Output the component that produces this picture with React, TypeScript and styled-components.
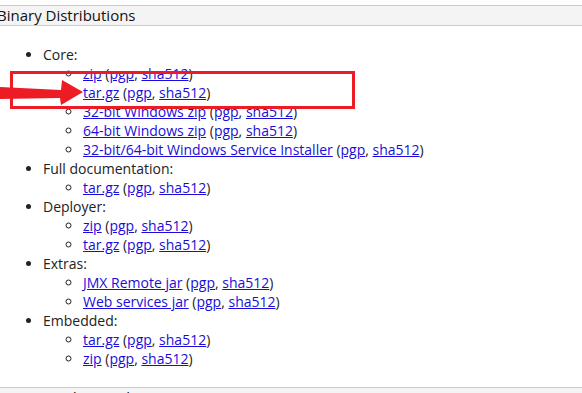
import React from 'react';
import styled, {createGlobalStyle} from 'styled-components';

const GlobalStyle = createGlobalStyle`
  html, body {
    margin: 0;
    padding: 0;
    background: #fff;
    overflow: hidden;
  }
  body {
    font-family: "Open Sans", "Liberation Sans", sans-serif;
    font-size: 14px;
    color: #222;
  }
`;

const Page = styled.div`
  position: relative;
  width: 582px;
  height: 393px;
  padding-top: 5px;
  box-sizing: border-box;
  overflow: hidden;
`;

const SectionHeader = styled.h3`
  margin: 0;
  height: 19px;
  line-height: 19px;
  background: #f4f4f4;
  border-top: 1px solid #ccc;
  border-bottom: 1px solid #ccc;
  font-size: 15px;
  font-weight: 400;
  color: #111;
  text-indent: -3px;
  white-space: nowrap;
`;

const Section = styled.div`
  padding: 19px 0 19px;
`;

const TopList = styled.ul`
  margin: 0;
  padding-left: 43px;
  list-style: disc;
  line-height: 19px;
`;

const SubList = styled.ul`
  margin: 0;
  padding-left: 40px;
  list-style: circle;
`;

const Link = styled.a`
  color: #1a0dd9;
  text-decoration: underline;
`;

const Highlight = styled.div`
  position: absolute;
  left: 10px;
  top: 71px;
  width: 339px;
  height: 32px;
  border: 3px solid #ed1c24;
`;

const Arrow = styled.svg`
  position: absolute;
  left: 0;
  top: 75px;
`;

type Item = { label: string };
type Group = { title: string; items: Item[] };

const groups: Group[] = [
  {title: 'Core:', items: [
    {label: 'zip'},
    {label: 'tar.gz'},
    {label: '32-bit Windows zip'},
    {label: '64-bit Windows zip'},
    {label: '32-bit/64-bit Windows Service Installer'},
  ]},
  {title: 'Full documentation:', items: [{label: 'tar.gz'}]},
  {title: 'Deployer:', items: [{label: 'zip'}, {label: 'tar.gz'}]},
  {title: 'Extras:', items: [{label: 'JMX Remote jar'}, {label: 'Web services jar'}]},
  {title: 'Embedded:', items: [{label: 'tar.gz'}, {label: 'zip'}]},
];

function Download({label}: Item) {
  return (
    <li>
      <Link href="#">{label}</Link> (<Link href="#">pgp</Link>, <Link href="#">sha512</Link>)
    </li>
  );
}

export default function App() {
  return (
    <Page>
      <GlobalStyle/>
      <SectionHeader>Binary Distributions</SectionHeader>
      <Section>
        <TopList>
          {groups.map(g =>
            <li key={g.title}>
              {g.title}
              <SubList>
                {g.items.map((it, i) => <Download key={i} {...it}/>)}
              </SubList>
            </li>
          )}
        </TopList>
      </Section>
      <SectionHeader>Source Code Distributions</SectionHeader>
      <Highlight/>
      <Arrow width="90" height="35" viewBox="0 0 90 35">
        <path d="M0 12 L61 15 L62 5 L83 17 L61 30 L60 23 L0 24 Z" fill="#ed1c24"/>
      </Arrow>
    </Page>
  );
}
